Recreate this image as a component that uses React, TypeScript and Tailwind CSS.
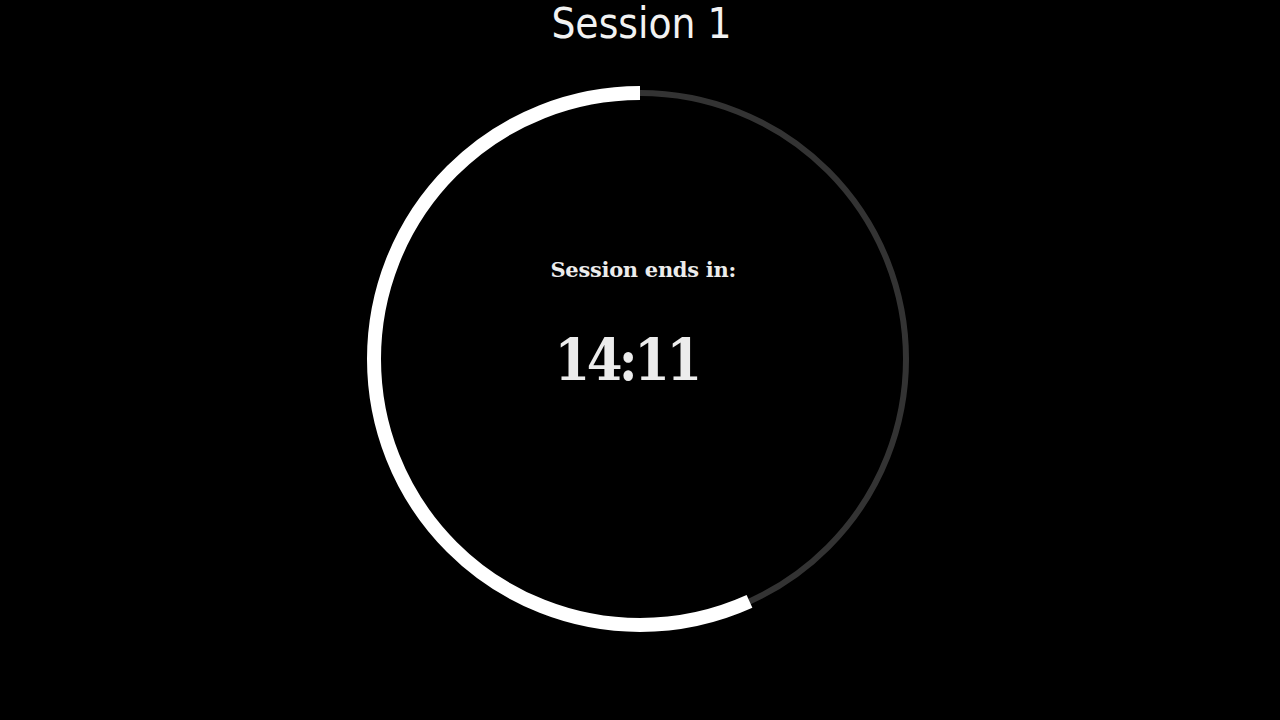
const TOTAL = 25 * 60;
const REMAINING = 14 * 60 + 11;

function Ring({ size, radius }: { size: number; radius: number }) {
  const c = 2 * Math.PI * radius;
  const left = (REMAINING / TOTAL) * c;
  return (
    <svg width={size} height={size} viewBox={`0 0 ${size} ${size}`}>
      <circle cx={size / 2} cy={size / 2} r={radius} fill="none" stroke="#333333" strokeWidth={6} />
      <circle
        cx={size / 2}
        cy={size / 2}
        r={radius}
        fill="none"
        stroke="#ffffff"
        strokeWidth={14}
        strokeDasharray={`${left} ${c}`}
        transform={`rotate(-90 ${size / 2} ${size / 2}) scale(1 -1) translate(0 -${size})`}
      />
    </svg>
  );
}

export default function App() {
  return (
    <main className="w-full h-screen bg-black flex flex-col items-center overflow-hidden">
      <h1 className="h-[79px] ml-[3px] text-[42px] leading-[48px] whitespace-nowrap text-[#f2f2f2] font-['DejaVu_Sans_Condensed','DejaVu_Sans',sans-serif]">
        Session 1
      </h1>
      <div className="grid place-items-center">
        <div className="col-start-1 row-start-1">
          <Ring size={560} radius={266} />
        </div>
        <div className="col-start-1 row-start-1 self-start mt-[178px] w-[190px] ml-[11px] flex flex-col items-start font-['DejaVu_Serif',serif] text-[#ececec]">
          <div className="text-[21px] font-bold leading-[26px] tracking-[-0.3px] whitespace-nowrap">Session ends in:</div>
          <div className="mt-[47px] ml-[4px] text-[57px] font-bold leading-[60px] tracking-[-3.5px] whitespace-nowrap font-['DejaVu_Serif_Condensed','DejaVu_Serif',serif]">
            14:11
          </div>
        </div>
      </div>
    </main>
  );
}
